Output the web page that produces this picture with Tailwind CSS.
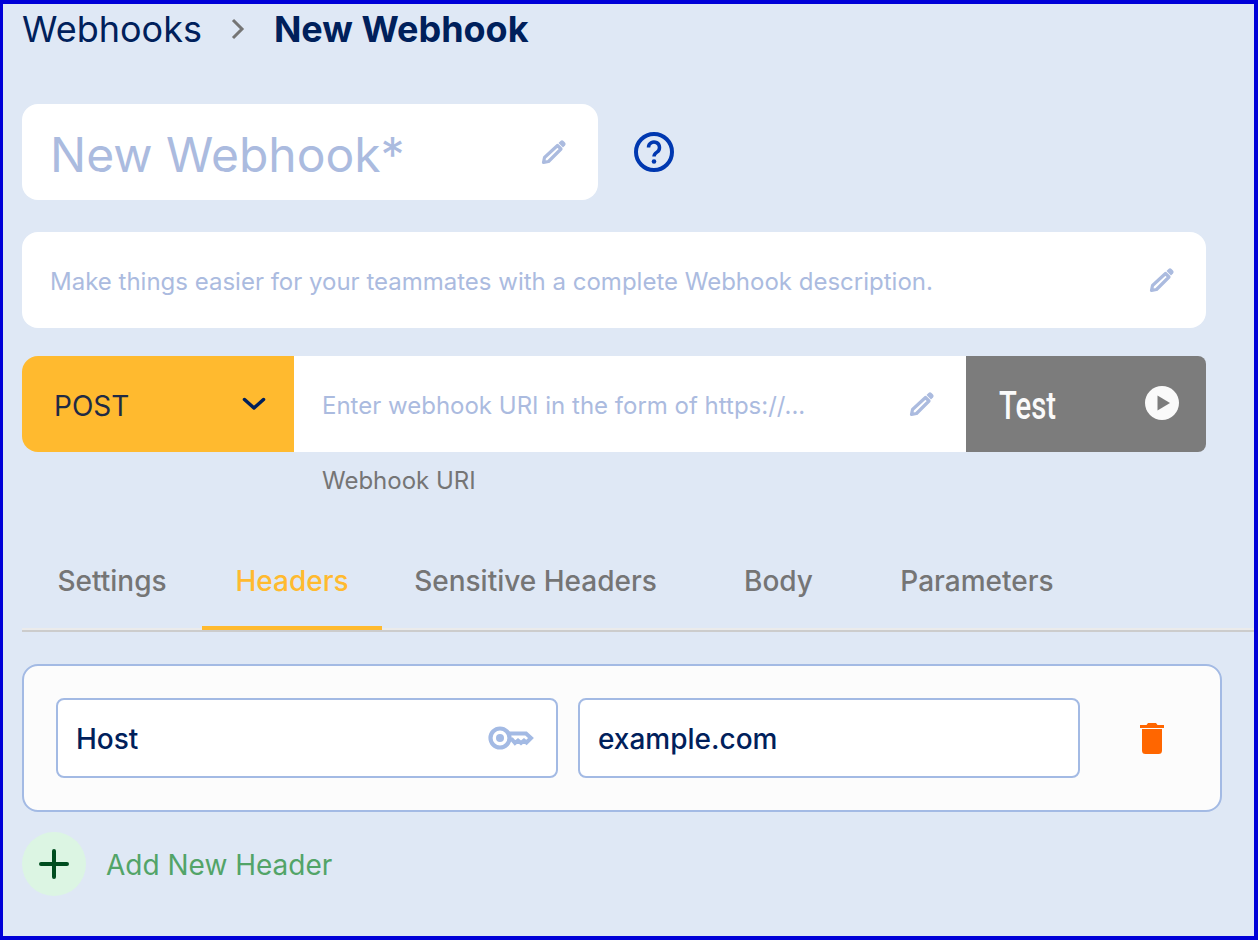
<!DOCTYPE html>
<html lang="en">
<head>
  <meta charset="UTF-8">
  <title>New Webhook</title>
  <script src="https://cdn.jsdelivr.net/npm/@tailwindcss/browser@4"></script>
</head>
<body class="bg-[#dfe8f5] font-['Inter',sans-serif]">
  <div class="w-[1258px] h-[940px] border-t-[4px] border-b-[4px] border-l-[3px] border-r-[4px] border-[#0000d8] overflow-hidden">

    <!-- Breadcrumb -->
    <div class="flex items-center h-[50px] pl-[19px]">
      <span class="text-[36px] leading-none text-[#00205b]">Webhooks</span>
      <svg class="w-[16px] h-[22px] ml-[28px] mr-[28px]" viewBox="0 0 16 22" fill="none" stroke="#757575" stroke-width="3"><path d="M3 2l9 9-9 9"/></svg>
      <span class="text-[36px] leading-none font-bold text-[#00205b]">New Webhook</span>
    </div>

    <!-- Name -->
    <div class="flex items-center mt-[50px] pl-[19px]">
      <div class="w-[576px] h-[96px] bg-white rounded-[16px] flex items-center justify-between pl-[28px] pr-[31px]">
        <span class="text-[48px] leading-none text-[#abbbdf] pt-[6px]">New Webhook*</span>
        <svg class="w-[26px] h-[26px]" viewBox="0 0 26 26" fill="none" stroke="#abbbdf"><path stroke-width="3.200" stroke-linejoin="round" d="M16.500 6.500 20 10 7.500 22.500 2.500 23.500l1-5z"/><path fill="#abbbdf" stroke="none" d="M19.500 2a2.200 2.200 0 0 1 3 0l1.500 1.500a2.200 2.200 0 0 1 0 3L22 8.500 17.500 4z"/></svg>
      </div>
      <svg class="w-[40px] h-[40px] ml-[36px]" viewBox="0 0 40 40" fill="none"><circle cx="20" cy="20" r="18" stroke="#0038b0" stroke-width="4"/><path d="M14.500 15.500a5.500 5.500 0 1 1 8.500 4.600c-2 1.300-3 2.300-3 4.400" stroke="#0038b0" stroke-width="3.500"/><circle cx="20" cy="29.500" r="2.300" fill="#0038b0"/></svg>
    </div>

    <!-- Description -->
    <div class="ml-[19px] mt-[32px] w-[1184px] h-[96px] bg-white rounded-[16px] flex items-center justify-between pl-[28px] pr-[31px]">
      <span class="text-[24px] text-[#abbbdf] pt-[4px]">Make things easier for your teammates with a complete Webhook description.</span>
      <svg class="w-[26px] h-[26px]" viewBox="0 0 26 26" fill="none" stroke="#abbbdf"><path stroke-width="3.200" stroke-linejoin="round" d="M16.500 6.500 20 10 7.500 22.500 2.500 23.500l1-5z"/><path fill="#abbbdf" stroke="none" d="M19.500 2a2.200 2.200 0 0 1 3 0l1.500 1.500a2.200 2.200 0 0 1 0 3L22 8.500 17.500 4z"/></svg>
    </div>

    <!-- URI row -->
    <div class="ml-[19px] mt-[28px] w-[1184px] h-[96px] flex">
      <div class="w-[272px] bg-[#ffba2f] rounded-l-[16px] flex items-center justify-between pl-[32px] pr-[28px]">
        <span class="text-[28px] text-[#1f2a44] pt-[4px]">POST</span>
        <svg class="w-[24px] h-[16px]" viewBox="0 0 24 16" fill="none" stroke="#00205b" stroke-width="3.500" stroke-linecap="round" stroke-linejoin="round"><path d="M2.500 3.500 12 12l9.500-8.500"/></svg>
      </div>
      <div class="w-[672px] bg-white flex items-center justify-between pl-[28px] pr-[31px]">
        <span class="text-[24px] text-[#abbbdf] pt-[4px]">Enter webhook URI in the form of https://...</span>
        <svg class="w-[26px] h-[26px]" viewBox="0 0 26 26" fill="none" stroke="#abbbdf"><path stroke-width="3.200" stroke-linejoin="round" d="M16.500 6.500 20 10 7.500 22.500 2.500 23.500l1-5z"/><path fill="#abbbdf" stroke="none" d="M19.500 2a2.200 2.200 0 0 1 3 0l1.500 1.500a2.200 2.200 0 0 1 0 3L22 8.500 17.500 4z"/></svg>
      </div>
      <div class="w-[240px] bg-[#7c7c7c] rounded-r-[8px] flex items-center justify-between pl-[33px] pr-[27px]">
        <span class="text-[39px] leading-none text-[#fafafa] font-['Roboto',sans-serif] font-medium inline-block origin-left scale-x-[0.75] pt-[4px]">Test</span>
        <svg class="w-[34px] h-[34px] -mt-[2px]" viewBox="0 0 34 34"><circle cx="17" cy="17" r="17" fill="#fafafa"/><path d="M12.500 9.500 25 17l-12.500 7.500z" fill="#7c7c7c"/></svg>
      </div>
    </div>
    <div class="ml-[319px] mt-[16px] text-[24px] leading-[26px] text-[#757575]">Webhook URI</div>

    <!-- Tabs -->
    <div class="ml-[19px] mt-[64px] h-[74px] border-b-2 border-[#cccccc]">
      <div class="h-[72px] flex items-start border-b-2 border-[#ebebeb] text-[28px] font-medium text-[#757575]">
        <div class="w-[180px] h-[72px] flex items-center justify-center pb-[26px]">Settings</div>
        <div class="w-[180px] h-[72px] flex items-center justify-center pb-[22px] text-[#ffba2f] border-b-[4px] border-[#ffba2f]">Headers</div>
        <div class="w-[307px] h-[72px] flex items-center justify-center pb-[26px]">Sensitive Headers</div>
        <div class="w-[179px] h-[72px] flex items-center justify-center pb-[26px]">Body</div>
        <div class="w-[218px] h-[72px] flex items-center justify-center pb-[26px]">Parameters</div>
      </div>
    </div>

    <!-- Header card -->
    <div class="ml-[19px] mt-[32px] w-[1200px] h-[148px] bg-[#fcfcfc] border-2 border-[#a3bae4] rounded-[16px] flex items-center pl-[32px]">
      <div class="w-[502px] h-[80px] bg-white border-2 border-[#a3bae4] rounded-[8px] flex items-center justify-between pl-[18px] pr-[22px]">
        <span class="text-[28px] font-medium text-[#00205b] pt-[2px]">Host</span>
        <svg class="w-[46px] h-[26px]" viewBox="0 0 46 26" fill="none"><circle cx="12" cy="13" r="9.500" stroke="#a3bae4" stroke-width="4.200"/><circle cx="12" cy="13" r="4" fill="#a3bae4"/><path d="M20 8.500h18l5 4.500-4.500 4.500-2.500-2-3 2.500-3-2.500-3 2.500-3-3.500h-4" stroke="#a3bae4" stroke-width="4"/></svg>
      </div>
      <div class="w-[502px] h-[80px] ml-[20px] bg-white border-2 border-[#a3bae4] rounded-[8px] flex items-center pl-[18px]">
        <span class="text-[28px] font-medium text-[#00205b] pt-[2px]">example.com</span>
      </div>
      <svg class="w-[24px] h-[31px] ml-[60px]" viewBox="0 0 24 31" fill="#ff6600"><path d="M8 0h8l1.500 2H24v3H0V2h6.500zM2 6h20v21.500a3.500 3.500 0 0 1-3.500 3.500h-13A3.500 3.500 0 0 1 2 27.500z"/></svg>
    </div>

    <!-- Add -->
    <div class="ml-[19px] mt-[20px] flex items-center">
      <div class="w-[64px] h-[64px] rounded-full bg-[#dcf5e3] flex items-center justify-center">
        <svg class="w-[30px] h-[30px]" viewBox="0 0 30 30" stroke="#004d1f" stroke-width="4" stroke-linecap="round"><path d="M15 2v26M2 15h26"/></svg>
      </div>
      <span class="ml-[20px] text-[28px] text-[#52a468] pt-[2px]">Add New Header</span>
    </div>
  </div>
</body>
</html>
